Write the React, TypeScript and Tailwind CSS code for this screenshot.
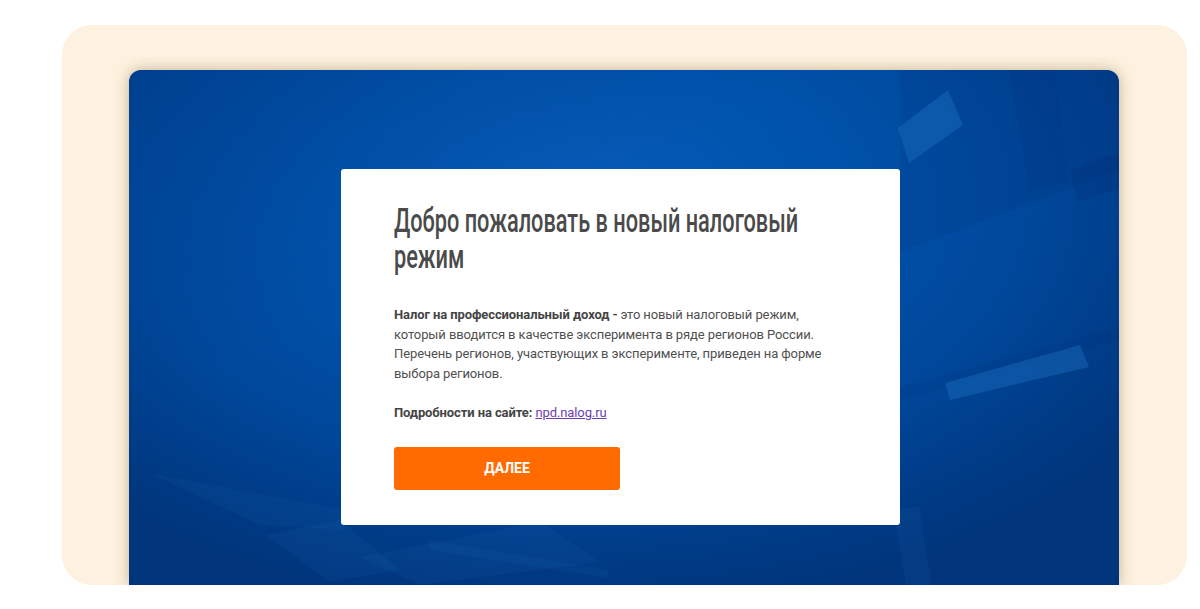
export default function App() {
  return (
    <div className="min-h-[609px] w-full bg-white pt-[25px] pl-[62px]">
      <div className="h-[560px] w-[1125px] overflow-hidden rounded-[30px] bg-[#fdf1df] px-[67px] pt-[45px]">
        <div className="relative h-[515px] w-[990px] overflow-hidden rounded-t-[12px] bg-[radial-gradient(ellipse_70%_80%_at_45%_25%,#075bb8_0%,#0053ac_35%,#00489b_65%,#003c88_85%,#00357b_100%)] shadow-[0_0_14px_rgba(110,80,30,0.4)]">
          <svg
            className="absolute inset-0"
            width="990"
            height="515"
            viewBox="0 0 990 515"
          >
            <defs>
              <linearGradient id="tl" x1="0" y1="0" x2="1" y2="1">
                <stop offset="0" stopColor="#003580" stopOpacity="0.35" />
                <stop offset="0.35" stopColor="#003580" stopOpacity="0" />
              </linearGradient>
            </defs>
            <rect x="0" y="0" width="990" height="515" fill="url(#tl)" />
            <polygon points="771,0 990,0 990,100 771,182" fill="#002a70" opacity="0.14" />
            <polygon points="880,0 925,0 940,112 900,120" fill="#002a70" opacity="0.12" />
            <polygon points="941,100 990,82 990,118 948,132" fill="#002a70" opacity="0.22" />
            <polygon points="769,58 819,20 834,55 780,93" fill="#1f72c2" opacity="0.4" />
            <polygon points="771,317 990,257 990,270 771,330" fill="#002a70" opacity="0.12" />
            <polygon points="816,313 951,275 960,297 821,330" fill="#1f72c2" opacity="0.4" />
            <polygon points="764,440 790,436 803,515 777,515" fill="#2a7ac8" opacity="0.1" />
            <polygon points="20,403 216,440 216,460 131,455" fill="#2a7ac8" opacity="0.08" />
            <polygon points="136,465 211,450 271,500 201,512" fill="#2a7ac8" opacity="0.1" />
            <polygon points="231,487 411,452 471,492 291,515" fill="#2a7ac8" opacity="0.09" />
            <polygon points="300,470 480,500 478,508 300,480" fill="#2a7ac8" opacity="0.08" />
          </svg>

          <div className="relative pl-[212px] pt-[99px]">
            <div className="w-[559px] rounded-[3px] bg-white px-[53px] pb-[35px] pt-[34px] font-['Roboto',sans-serif] text-[#505050]">
              <h1 className="text-[33px] font-medium leading-[36px] text-[#4a4a4a]">
                <span className="block origin-left scale-x-[0.659] whitespace-nowrap">
                  Добро пожаловать в новый налоговый
                </span>
                <span className="block origin-left scale-x-[0.659] whitespace-nowrap">
                  режим
                </span>
              </h1>
              <p className="mt-[30px] whitespace-nowrap text-[13px] leading-[19.5px] tracking-[-0.1px]">
                <span className="font-bold text-[#444]">Налог на профессиональный доход -</span> это новый налоговый режим,
                <br />
                который вводится в качестве эксперимента в ряде регионов России.
                <br />
                Перечень регионов, участвующих в эксперименте, приведен на форме
                <br />
                выбора регионов.
              </p>
              <p className="mt-[19.5px] text-[13px] leading-[19.5px] tracking-[-0.1px]">
                <span className="font-bold text-[#444]">Подробности на сайте:</span>{" "}
                <a href="#" className="text-[#6a3fb0] underline">
                  npd.nalog.ru
                </a>
              </p>
              <button className="mt-[24.5px] flex h-[43px] w-[226px] items-center justify-center rounded-[3px] bg-[#ff6b00] text-[14px] font-bold text-white">
                ДАЛЕЕ
              </button>
            </div>
          </div>
        </div>
      </div>
    </div>
  );
}
